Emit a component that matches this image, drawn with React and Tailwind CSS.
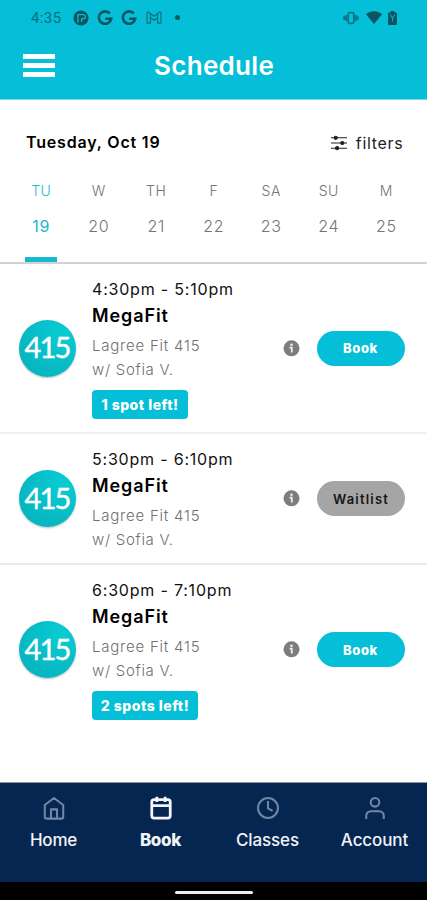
import React from "react";

const days = [
  ["TU", "19"],
  ["W", "20"],
  ["TH", "21"],
  ["F", "22"],
  ["SA", "23"],
  ["SU", "24"],
  ["M", "25"],
];

const classes = [
  { time: "4:30pm - 5:10pm", spots: "1 spot left!", badge: "w-[96px]", action: "Book", row: "h-[168px]" },
  { time: "5:30pm - 6:10pm", spots: null, badge: "", action: "Waitlist", row: "h-[129px]" },
  { time: "6:30pm - 7:10pm", spots: "2 spots left!", badge: "w-[106px]", action: "Book", row: "h-[169px]" },
];

function GoogleIcon() {
  return (
    <svg width="16" height="16" viewBox="0 0 16 16" fill="none" stroke="#0b5560" strokeWidth="2.6">
      <path d="M12.9 3.6A6.200 6.200 0 1 0 14.200 8.700H8.200" />
    </svg>
  );
}

function StatusBar() {
  return (
    <div className="flex h-[35px] items-center text-[#0b6d7a]">
      <span className="ml-[31px] w-[42px] pt-[2px] text-[15px] leading-none tracking-[0.4px] font-['Roboto',sans-serif]">4:35</span>
      <svg width="16" height="16" viewBox="0 0 16 16">
        <circle cx="8" cy="8" r="7.600" fill="#0b5560" />
        <path d="M5 12.500V4.600h5.200a2 2 0 0 1 0 4.200H8.600V12" fill="none" stroke="#04bfd7" strokeWidth="1.300" />
      </svg>
      <div className="ml-[8px] flex gap-[8px]">
        <GoogleIcon />
        <GoogleIcon />
      </div>
      <svg className="ml-[9px]" width="16" height="13" viewBox="0 0 17 14" fill="none" stroke="#0b6d7a" strokeWidth="1.2">
        <path d="M1 13V1.8l1.4-.8 6.1 4.7L14.6 1l1.4.8V13h-3.6V7.2L8.5 10 4.6 7.2V13ZM4.6 2.7v4.5M12.4 2.7v4.5" />
      </svg>
      <span className="ml-[13px] size-[5px] rounded-full bg-[#0b5560]" />
      <svg className="ml-[163px]" width="16" height="14" viewBox="0 0 16 14" fill="none" stroke="#0b7482">
        <rect x="5.2" y="1.7" width="5.6" height="10.6" rx="1.3" strokeWidth="1.7" />
        <path d="M3.2 3.9v6.2M1.2 5.3v3.4M12.8 3.9v6.2M14.8 5.3v3.4" strokeWidth="1.9" />
      </svg>
      <svg className="ml-[7px]" width="16" height="13" viewBox="0 0 16 13" fill="#0b5560">
        <path d="M0 3.2C4.5-.7 11.500-.7 16 3.200L8 13Z" />
      </svg>
      <svg className="ml-[6px]" width="9" height="14" viewBox="0 0 9 14">
        <path d="M2.600 0h3.800v1.500h1.300q1.300 0 1.300 1.300v9.900q0 1.300-1.300 1.300H1.300Q0 14 0 12.700V2.800Q0 1.500 1.300 1.500h1.300Z" fill="#0b5560" />
        <path d="m2.200 3.500 2.300 3.500L6.800 3.500M4.500 7v3.500" fill="none" stroke="#04aec4" strokeWidth="1.1" />
      </svg>
    </div>
  );
}

function Studio() {
  return (
    <div className="ml-[18.5px] flex size-[57px] shrink-0 items-center justify-center rounded-full bg-[radial-gradient(circle_at_75%_25%,#08ccd3,#08bbc5_55%,#05afbb)] shadow-[0_1px_2px_rgba(0,0,0,0.25)]">
      <span className="-mt-[3px] mr-[0px] text-[29px] leading-none tracking-[-1.900px] text-white [-webkit-text-stroke:0.4px_white] font-['Lato',sans-serif]">415</span>
    </div>
  );
}

function InfoIcon() {
  return (
    <svg className="shrink-0" width="17" height="17" viewBox="0 0 17 17">
      <circle cx="8.500" cy="8.300" r="8" fill="#7d7d7d" />
      <circle cx="8.500" cy="4.800" r="1.300" fill="#eee" />
      <path d="M6.500 7.600h2.300v5" fill="none" stroke="#eee" strokeWidth="1.800" />
    </svg>
  );
}

function ClassRow({ item }) {
  return (
    <div className={`flex items-center ${item.row}`}>
      <Studio />
      <div className="ml-[16.5px] w-[190.500px] shrink-0 self-start pt-[13px] whitespace-nowrap">
        <div className="h-[24px] text-[16px] leading-[24px] tracking-[0.8px] text-[#111]">{item.time}</div>
        <div className="h-[30px] text-[18px] leading-[30px] font-semibold tracking-[0.9px] text-black">MegaFit</div>
        <div className="mt-[3px] h-[24px] text-[15px] leading-[24px] font-light tracking-[0.78px] text-[#707070]">Lagree Fit 415</div>
        <div className="h-[24px] text-[15px] leading-[24px] font-light tracking-[0.7px] text-[#707070]">w/ Sofia V.</div>
        {item.spots && (
          <div className={`mt-[7.500px] flex h-[29px] items-center justify-center rounded-[4px] bg-[#04bfd7] pt-[1px] text-[14px] font-extrabold tracking-[0.5px] text-white ${item.badge}`}>
            {item.spots}
          </div>
        )}
      </div>
      <InfoIcon />
      <button
        className={`ml-[17px] h-[35px] w-[88px] rounded-full pt-[2px] text-[13px] ${
          item.action === "Book" ? "bg-[#04bfd7] font-extrabold tracking-[0.6px] text-white" : "bg-[#a5a5a5] pl-[1px] font-semibold tracking-[1.200px] text-[#151515]"
        }`}
      >
        {item.action}
      </button>
    </div>
  );
}

const tabs = [
  {
    label: "Home",
    pos: "w-[107px]",
    text: "font-medium tracking-[-0.2px]",
    icon: <path d="M3 9.800 13 2.200l10 7.600v12.700a2 2 0 0 1-2 2H5a2 2 0 0 1-2-2ZM9.700 24v-9.500h6.600V24" />,
  },
  {
    label: "Book",
    pos: "w-[107px]",
    text: "font-extrabold tracking-[-0.3px]",
    active: true,
    icon: <path d="M5.500 4h15a2.500 2.500 0 0 1 2.500 2.500v15a2.500 2.500 0 0 1-2.500 2.500h-15a2.500 2.500 0 0 1-2.500-2.500v-15a2.500 2.500 0 0 1 2.500-2.500ZM3 10.500h20M8.500 .800v5.700M17.500 .800v5.700" />,
  },
  {
    label: "Classes",
    pos: "w-[107px]",
    text: "font-medium tracking-[-0.100px]",
    icon: (
      <>
        <circle cx="13" cy="13" r="10.800" />
        <path d="M13 5.500v8l5 2.700" />
      </>
    ),
  },
  {
    label: "Account",
    pos: "w-[107px]",
    text: "font-medium tracking-[-0.100px]",
    icon: (
      <>
        <circle cx="13" cy="6.800" r="4.700" />
        <path d="M3.500 25v-3.500a5 5 0 0 1 5-5h9a5 5 0 0 1 5 5V25" />
      </>
    ),
  },
];

export default function App() {
  return (
    <div className="flex h-[900px] w-[427px] flex-col overflow-hidden bg-white font-['Inter',sans-serif]">
      <header className="h-[100px] shrink-0 border-b border-[#7edce8] bg-[#04bfd7]">
        <StatusBar />
        <div className="flex h-[61px] items-center">
          <div className="ml-[23px] flex w-[32px] flex-col gap-[4px] pb-[1px]">
            <span className="h-[5px] bg-white" />
            <span className="h-[5px] bg-white" />
            <span className="h-[5px] bg-white" />
          </div>
          <h1 className="ml-[99px] text-[26px] leading-none font-semibold tracking-[0.3px] text-white">Schedule</h1>
        </div>
      </header>

      <section className="h-[164px] shrink-0 border-b-2 border-[#d2d2d2]">
        <div className="flex h-[66px] items-center justify-between pt-[17px] pr-[23.500px] pl-[26px]">
          <h2 className="text-[16px] font-semibold tracking-[0.82px] text-black">Tuesday, Oct 19</h2>
          <div className="flex items-center gap-[9px] pt-[2px] text-[16px] tracking-[0.700px] text-[#222]">
            <svg width="16" height="16" viewBox="0 0 17 16" stroke="#222" strokeWidth="1.100">
              <path d="M0 2.500h17M0 8h17M0 13.500h17" />
              <circle cx="5" cy="2.500" r="1.700" fill="#222" />
              <circle cx="12" cy="8" r="1.700" fill="#222" />
              <circle cx="6.500" cy="13.500" r="1.700" fill="#222" />
            </svg>
            filters
          </div>
        </div>
        <div className="ml-[12.500px] flex h-[96px]">
          {days.map(([name, date], i) => (
            <div
              key={name}
              className={`flex w-[57.500px] shrink-0 flex-col items-center ${i === 0 ? "text-[#18b8cf]" : "text-[#757575]"}`}
            >
              <span className="mt-[15px] h-[20px] text-[14px] leading-[20px] font-light tracking-[0.5px]">{name}</span>
              <span className={`mt-[14px] h-[22px] text-[16px] leading-[22px] tracking-[0.7px] ${i === 0 ? "font-normal" : "font-light"}`}>{date}</span>
              {i === 0 && <span className="mt-auto h-[5px] w-[32px] bg-[#18b8cf]" />}
            </div>
          ))}
        </div>
      </section>

      <main className="min-h-0 flex-1">
        <ClassRow item={classes[0]} />
        <div className="h-[2px] bg-[#f0f0f0]" />
        <ClassRow item={classes[1]} />
        <div className="h-[2px] bg-[#ebebeb]" />
        <ClassRow item={classes[2]} />
      </main>

      <nav className="flex h-[100px] shrink-0 border-t border-[#8796a8] bg-[#052650]">
        {tabs.map((tab) => (
          <div key={tab.label} className={`flex shrink-0 flex-col items-center pt-[13px] ${tab.pos}`}>
            <svg
              width="24"
              height="24"
              viewBox="0 0 26 26"
              fill="none"
              stroke={tab.active ? "#f4f5fa" : "#7187a6"}
              strokeWidth={tab.active ? "3" : "2.2"}
              strokeLinejoin="round"
            >
              {tab.icon}
            </svg>
            <span className={`mt-[8px] text-[17px] leading-[24px] text-[#f1f3f7] ${tab.text}`}>{tab.label}</span>
          </div>
        ))}
      </nav>
      <div className="flex h-[18px] shrink-0 justify-center bg-black pt-[9px]">
        <span className="h-[3px] w-[78px] rounded-full bg-[#eee]" />
      </div>
    </div>
  );
}
